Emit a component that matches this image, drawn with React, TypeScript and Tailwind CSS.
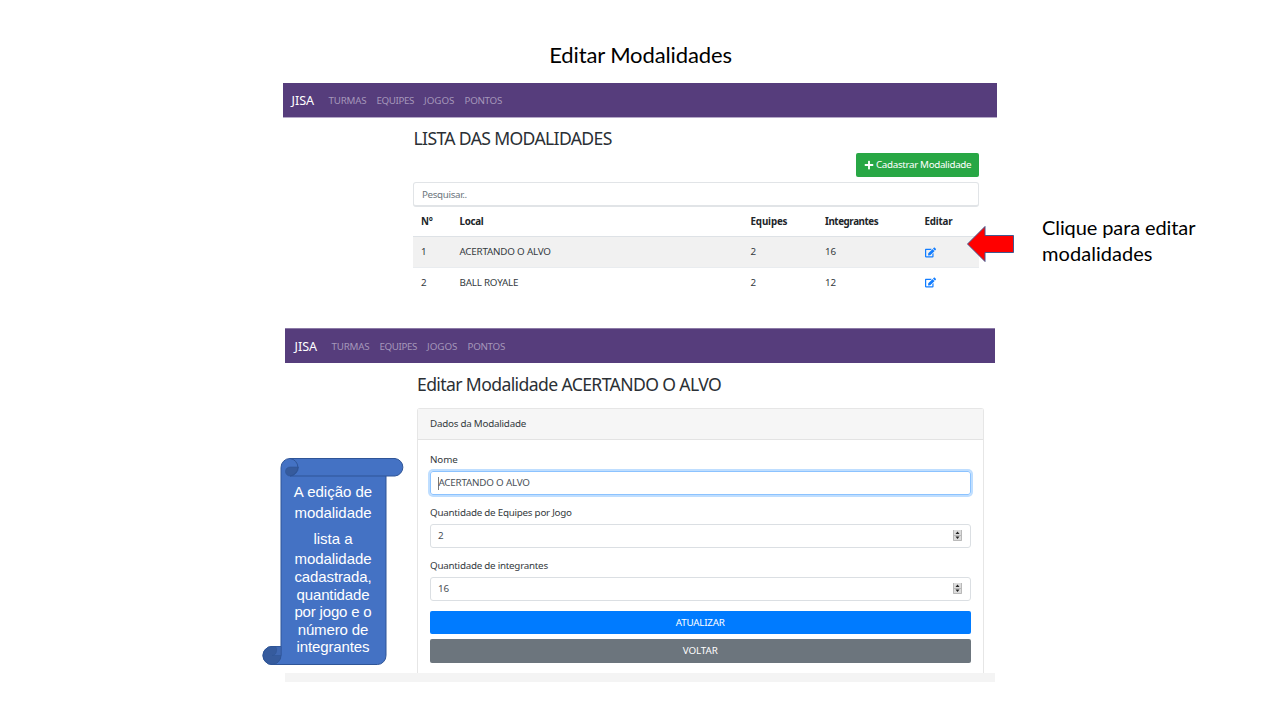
import { FaEdit, FaPlus } from "react-icons/fa";

function Nav({ className = "" }: { className?: string }) {
  return (
    <nav className={"flex shrink-0 items-center bg-[#563d7c] pt-[2px] text-[9.8px] text-[#a597ba] " + className}>
      <span className="w-[37px] text-[12.6px] text-white">JISA</span>
      <span className="w-[48px] tracking-[-0.2px]">TURMAS</span>
      <span className="w-[47.5px] tracking-[-0.4px]">EQUIPES</span>
      <span className="w-[40.5px]">JOGOS</span>
      <span className="tracking-[-0.3px]">PONTOS</span>
    </nav>
  );
}

const GRID = "grid grid-cols-[38.5px_291px_74.5px_99.5px_54px] items-center pl-2";

const rows = [
  { n: 1, local: "ACERTANDO O ALVO", equipes: 2, integrantes: 16, style: "h-[30px] bg-[#f1f1f1] pt-px" },
  { n: 2, local: "BALL ROYALE", equipes: 2, integrantes: 12, style: "h-[31px] border-t border-[#e9ecef]" },
];

function ListScreen() {
  return (
    <section className="ml-[283px] w-[714px]">
      <Nav className="h-[35px] border-b border-[#b5a9c8] pl-[8.5px]" />
      <div className="ml-[130px] flex w-[566px] flex-col">
        <h2 className="mt-[7px] h-[27px] pl-[0.5px] text-[17.6px] leading-[27px] tracking-[-0.65px] text-[#2b3035]">LISTA DAS MODALIDADES</h2>
        <button className="mt-px flex h-[24px] w-[123px] items-center gap-[2px] self-end rounded-[2px] bg-[#28a745] pl-2 tracking-[-0.33px] text-white">
          <FaPlus className="size-[10px]" />
          <span className="pt-px">Cadastrar Modalidade</span>
        </button>
        <div className="mt-[5px] flex h-[25px] items-center rounded-[3px] border border-b-2 border-[#e1e4e7] pt-[2px] pl-2 tracking-[-0.35px] text-[#6c757d]">
          Pesquisar..
        </div>
        <div className={GRID + " h-[30px] border-b border-[#dee2e6] pt-[2px] font-bold text-[#212529]"}>
          <span className="tracking-[-0.15px]">N°</span>
          <span className="tracking-[-0.3px]">Local</span>
          <span className="tracking-[-0.15px]">Equipes</span>
          <span className="tracking-[-0.42px]">Integrantes</span>
          <span className="tracking-[-0.2px]">Editar</span>
        </div>
        {rows.map((r) => (
          <div key={r.n} className={GRID + " " + r.style}>
            <span>{r.n}</span>
            <span className="tracking-[-0.2px]">{r.local}</span>
            <span>{r.equipes}</span>
            <span>{r.integrantes}</span>
            <FaEdit className="mb-px size-[11px] text-[#127dff]" />
          </div>
        ))}
      </div>
    </section>
  );
}

function Spinner() {
  return (
    <svg className="mb-px h-[11px] w-[9px]" viewBox="0 0 9 11">
      <rect width="9" height="11" fill="#dcdcdc" />
      <path d="M.5 0v10.5h8V0M0 5.5h9" fill="none" stroke="#b9b9b9" />
      <path d="M4.5 1.5 6.5 4h-4zM4.5 9 6.5 6.5h-4z" fill="#222" />
    </svg>
  );
}

function NumberField({ label, value }: { label: string; value: number }) {
  return (
    <div>
      <div className="h-[29px] pt-[11px] leading-[14px] tracking-[-0.24px]">{label}</div>
      <div className="flex h-[24px] items-center justify-between rounded-[3px] border border-[#dbdfe3] pr-2 pl-[7px] text-[#495057]">
        <span className="pt-px">{value}</span>
        <Spinner />
      </div>
    </div>
  );
}

function EditScreen() {
  return (
    <section className="mt-[30px] ml-[285px] w-[710px]">
      <Nav className="h-[35px] border-t border-[#8b7aa6] pl-[9.5px]" />
      <div className="ml-[132px] w-[567px]">
        <h2 className="mt-[8px] h-[26px] text-[17.6px] leading-[26px] tracking-[-0.62px] text-[#2b3035]">Editar Modalidade ACERTANDO O ALVO</h2>
        <div className="mt-[11px] h-[265px] w-[566.5px] rounded-t-[3px] border border-b-0 border-[#e6e6e6]">
          <div className="flex h-[31px] items-center border-b border-[#e3e3e3] bg-[#f6f6f6] pt-px pl-3 tracking-[-0.23px]">Dados da Modalidade</div>
          <div className="px-3">
            <div className="h-[31px] pt-[13px] leading-[14px] tracking-[-0.1px]">Nome</div>
            <div className="flex h-[24px] items-center rounded-[3px] border border-[#8cc3ff] pl-[7px] tracking-[-0.2px] text-[#495057] shadow-[0_0_0_2px_#bfdeff]">
              <span className="h-[13px] w-px bg-[#777]" />
              <span className="-ml-[0.5px] pt-px">ACERTANDO O ALVO</span>
            </div>
            <NumberField label="Quantidade de Equipes por Jogo" value={2} />
            <NumberField label="Quantidade de integrantes" value={16} />
            <button className="mt-[10px] block h-[23px] w-full rounded-[2px] bg-[#007bff] pt-px tracking-[-0.2px] text-white">ATUALIZAR</button>
            <button className="mt-[5px] block h-[24px] w-full rounded-[2px] bg-[#6c757d] tracking-[-0.1px] text-white">VOLTAR</button>
          </div>
        </div>
      </div>
      <div className="h-[9px] bg-[#f4f4f4]" />
    </section>
  );
}

function Scroll() {
  return (
    <div className="absolute top-[457px] left-[262px] h-[210px] w-[144px] font-['Liberation_Sans',sans-serif] text-[15px] text-white">
      <svg className="absolute inset-0" width="144" height="210" viewBox="262 457 144 210">
        <g stroke="#2f5597" strokeWidth="1">
          <path d="M281 646.500H272a9 9 0 0 0 0 18H377.500a8.500 9 0 0 0 8.500-9V476H395a8.800 8.800 0 0 0 0-17.500H290a9 9 0 0 0-9 9z" fill="#4472c4" />
          <path d="M290 467h8.500a9 9 0 0 1-8.500 9 4.500 4.500 0 0 1 0-9z" fill="#365b9d" strokeWidth=".6" />
          <path d="M281 646.500H272a9 9 0 1 0 9 9z" fill="#365b9d" />
          <path d="M281 646.500v9h-9a4.500 4.500 0 0 0 4.500-4.500 4.500 4.500 0 0 0-1-4.500z" fill="#4068b2" strokeWidth=".6" />
          <path d="M290 458.500a8.800 8.800 0 0 1 0 17.500H386" fill="none" />
        </g>
      </svg>
      <div className="relative ml-[19px] flex w-[104px] flex-col items-center pt-[26px] leading-[18px] whitespace-nowrap">
        <p>A edição de</p>
        <p className="mt-[3px] tracking-[-0.05px]">modalidade</p>
        <p className="mt-[8px]">lista a</p>
        <p className="mt-[2px] tracking-[-0.05px]">modalidade</p>
        <p className="tracking-[-0.12px]">cadastrada,</p>
        <p className="tracking-[-0.12px]">quantidade</p>
        <p className="-mt-px tracking-[-0.18px]">por jogo e o</p>
        <p className="tracking-[-0.12px]">número de</p>
        <p className="-mt-px tracking-[-0.12px]">integrantes</p>
      </div>
    </div>
  );
}

export default function App() {
  return (
    <main className="relative h-[720px] w-[1280px] overflow-hidden bg-white font-['Noto_Sans',sans-serif] text-[9.8px] text-[#343a40]">
      <h1 className="h-[83px] pt-[40px] pl-px text-center font-[Lato,sans-serif] text-[22px] leading-[30px] tracking-[-0.12px] text-black">
        Editar Modalidades
      </h1>
      <ListScreen />
      <EditScreen />
      <svg className="absolute top-[224px] left-[965px]" width="50" height="40" viewBox="965 224 50 40">
        <path d="M967.500 244 985 226.500V235.500H1013.500V252.500H985V261.500Z" fill="#f00" stroke="#41598f" />
      </svg>
      <p className="absolute top-[214px] left-[1042px] font-[Lato,sans-serif] text-[20px] leading-[26px] whitespace-nowrap text-black">
        <span className="tracking-[-0.1px]">Clique para editar</span>
        <br />
        <span className="tracking-[0.05px]">modalidades</span>
      </p>
      <Scroll />
    </main>
  );
}
